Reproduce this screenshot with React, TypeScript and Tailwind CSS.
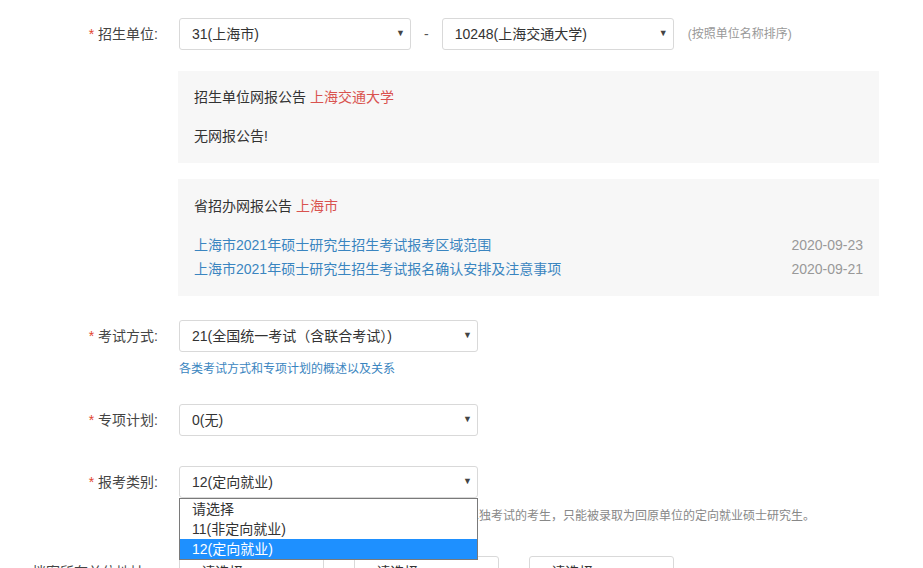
import React from "react";

const FONT = "font-['Liberation_Sans','Noto_Sans_CJK_SC',sans-serif]";

function FakeSelect({ value, width }: { value: string; width: string }) {
  return (
    <div
      className={`${width} flex h-[32px] items-center justify-between rounded-[3px] border border-[#d9d9d9] bg-white pl-[12px] pr-[5px] text-[14px] text-[#333]`}
    >
      <span className="truncate">{value}</span>
      <span className="text-[9px] text-[#444]">▼</span>
    </div>
  );
}

function Label({ text, required = true }: { text: string; required?: boolean }) {
  return (
    <div className="w-[158px] shrink-0 text-right text-[14px] text-[#444]">
      {required && <span className="mr-[4px] text-[#e2452f]">*</span>}
      {text}
    </div>
  );
}

export default function App() {
  const notices = [
    { title: "上海市2021年硕士研究生招生考试报考区域范围", date: "2020-09-23" },
    { title: "上海市2021年硕士研究生招生考试报名确认安排及注意事项", date: "2020-09-21" },
  ];

  return (
    <div className={`${FONT} h-[568px] w-[923px] overflow-hidden bg-white pt-[18px]`}>
      {/* 招生单位 */}
      <div className="flex items-center">
        <Label text="招生单位:" />
        <div className="ml-[21px] flex items-center">
          <FakeSelect value="31(上海市)" width="w-[232px]" />
          <span className="mx-[13px] text-[14px] text-[#555]">-</span>
          <FakeSelect value="10248(上海交通大学)" width="w-[232px]" />
          <span className="ml-[14px] text-[12px] text-[#999]">(按照单位名称排序)</span>
        </div>
      </div>

      <div className="ml-[178px] w-[701px]">
        <div className="mt-[21px] h-[92px] bg-[#f7f7f7] px-[16px] pt-[16px] text-[14px] leading-[20px] text-[#333]">
          <p>
            招生单位网报公告 <span className="text-[#d9534f]">上海交通大学</span>
          </p>
          <p className="mt-[19px]">无网报公告!</p>
        </div>

        <div className="mt-[16px] h-[117px] bg-[#f7f7f7] px-[16px] pt-[17px] text-[14px] leading-[20px] text-[#333]">
          <p>
            省招办网报公告 <span className="text-[#d9534f]">上海市</span>
          </p>
          <ul className="mt-[17px]">
            {notices.map((n) => (
              <li key={n.date} className="flex justify-between leading-[24px]">
                <span className="text-[#3a85c0]">{n.title}</span>
                <span className="text-[#999]">{n.date}</span>
              </li>
            ))}
          </ul>
        </div>
      </div>

      {/* 考试方式 */}
      <div className="mt-[24px] flex items-center">
        <Label text="考试方式:" />
        <div className="ml-[21px]">
          <FakeSelect value="21(全国统一考试（含联合考试）)" width="w-[299px]" />
        </div>
      </div>
      <p className="ml-[179px] mt-[9px] text-[12px] leading-[16px] text-[#3a85c0]">
        各类考试方式和专项计划的概述以及关系
      </p>

      {/* 专项计划 */}
      <div className="mt-[27px] flex items-center">
        <Label text="专项计划:" />
        <div className="ml-[21px]">
          <FakeSelect value="0(无)" width="w-[299px]" />
        </div>
      </div>

      {/* 报考类别 */}
      <div className="mt-[30px] flex items-center">
        <Label text="报考类别:" />
        <div className="relative z-10 ml-[21px]">
          <FakeSelect value="12(定向就业)" width="w-[299px]" />
          <ul className="absolute left-0 top-full w-[299px] border border-[#7a7a7a] bg-white text-[14px] leading-[20px] text-[#333]">
            <li className="pl-[12px]">请选择</li>
            <li className="pl-[12px]">11(非定向就业)</li>
            <li className="bg-[#1e90ff] pl-[12px] text-white">12(定向就业)</li>
          </ul>
        </div>
      </div>
      <p className="ml-[179px] mt-[10px] whitespace-nowrap text-[12px] leading-[16px] text-[#888]">
        注：定向就业的考生，以及报考少数民族骨干计划者或单独考试的考生，只能被录取为回原单位的定向就业硕士研究生。
      </p>

      {/* 档案所在地 */}
      <div className="mt-[32px] flex items-center">
        <div className="w-[158px] shrink-0 text-right text-[14px] text-[#444]">档案所在单位地址：</div>
        <div className="ml-[21px] flex gap-[30px]">
          <FakeSelect value="--请选择--" width="w-[145px]" />
          <FakeSelect value="--请选择--" width="w-[145px]" />
          <FakeSelect value="--请选择--" width="w-[145px]" />
        </div>
      </div>
    </div>
  );
}
